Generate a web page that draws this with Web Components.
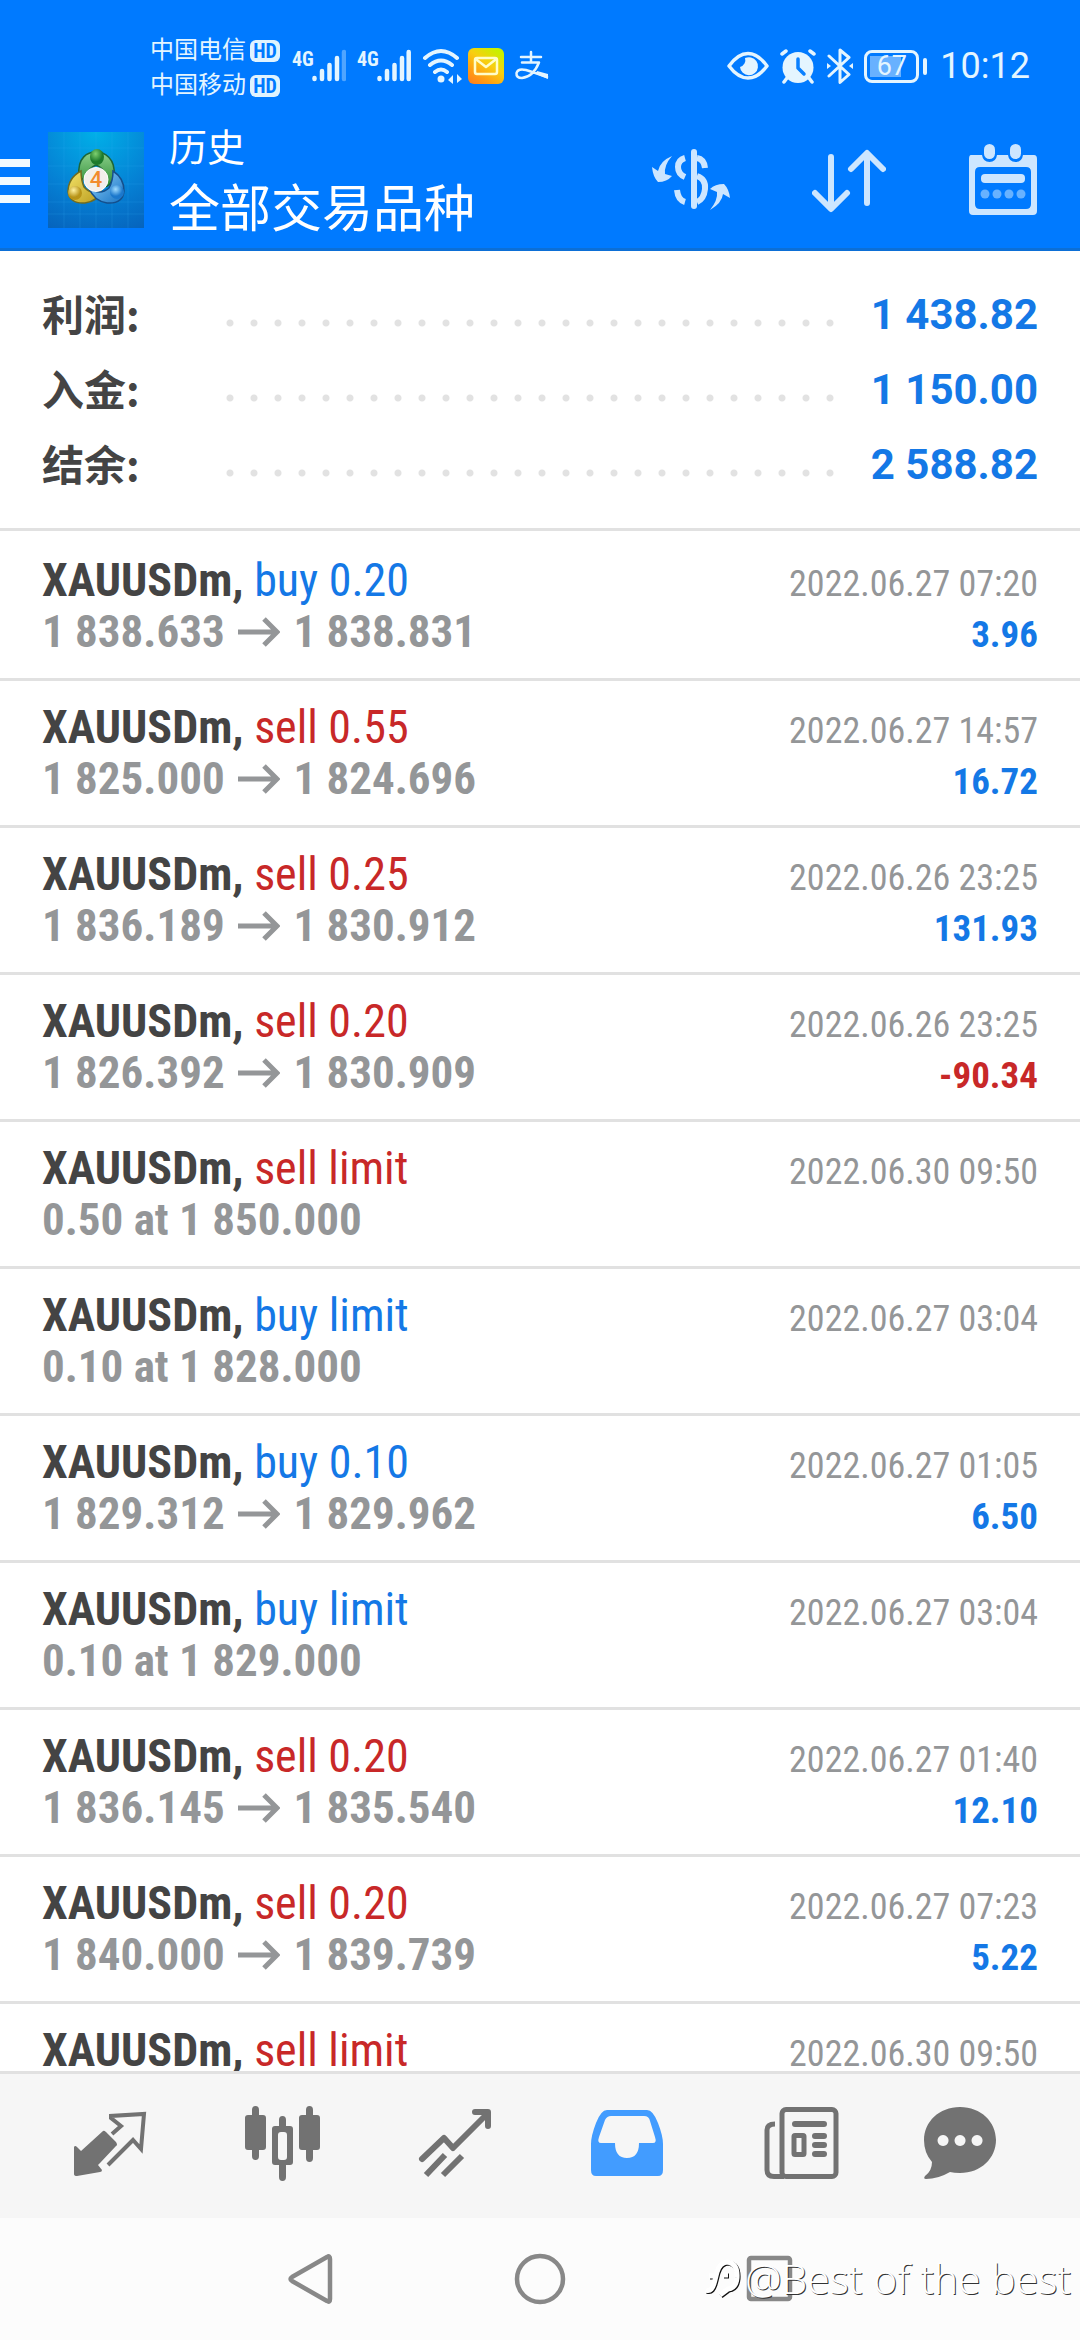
<!DOCTYPE html>
<html lang="zh-CN">
<head>
<meta charset="utf-8">
<meta name="viewport" content="width=device-width">
<title>历史</title>
<style>
  html, body { margin: 0; height: 100%; }
  body { background: #fff; font-family: Roboto, "Noto Sans CJK SC", sans-serif; }
</style>
</head>
<body>
<history-app></history-app>

<template id="t-status">
  <style>
    :host { display: flex; align-items: center; height: 64px; padding: 36px 50px 0 150px; color: #e4f5ff; }
    .carriers { display: grid; gap: 0; }
    .carrier { display: flex; align-items: center; gap: 4px; font-size: 24px; line-height: 35px; }
    .hd { box-sizing: border-box; width: 30px; height: 22px; border-radius: 6px; background: #dff3ff; color: #007aff; font: bold 20px/22px "Roboto Condensed", "Liberation Sans Narrow", sans-serif; text-align: center; }
    .cell { display: flex; align-items: flex-start; height: 34px; }
    .cell span { font: bold 20px/20px "Roboto Condensed", "Liberation Sans Narrow", sans-serif; width: 18px; }
    .left, .right { display: flex; align-items: center; margin-top: -4px; }
    .left { margin-left: 12px; gap: 11px; }
    .right { margin-left: auto; gap: 11px; }
    .grp { display: flex; align-items: center; gap: 6px; }
    svg { display: block; fill: none; stroke: currentColor; stroke-linecap: round; stroke-linejoin: round; }
    .bat { display: flex; align-items: center; gap: 4px; margin-right: 2px; }
    .bat b { box-sizing: border-box; width: 55px; height: 33px; border: 3px solid; border-radius: 8px; padding: 3px; font: 400 27px/21px Roboto, sans-serif; background: linear-gradient(#68b1ff, #68b1ff) 3px 3px / 31px 21px no-repeat; text-align: center; }
    .bat i { width: 4px; height: 17px; border-radius: 2px; background: currentColor; }
    time { font-size: 36px; line-height: 40px; font-weight: 400; }
  </style>
  <div class="carriers">
    <div class="carrier">中国电信<span class="hd">HD</span></div>
    <div class="carrier">中国移动<span class="hd">HD</span></div>
  </div>
  <div class="left">
    <div class="cell"><span>4G</span><svg width="36" height="34" viewBox="0 0 36 34" stroke-width="4.500"><path d="M4.500 29v1M12 22v8M19.500 16v14M27 9v21"/><path d="M34 3v27" opacity=".35"/></svg></div>
    <div class="cell"><span>4G</span><svg width="36" height="34" viewBox="0 0 36 34" stroke-width="4.500"><path d="M4.500 29v1M12 22v8M19.500 16v14M27 9v21M33.700 3v27"/></svg></div>
    <div class="grp">
      <svg width="40" height="36" viewBox="0 0 40 36" stroke-width="4"><path d="M3 10Q19 -4 35 10M8 17Q19 8 30 17M13 24Q19 19 25 24"/><circle cx="19" cy="31" r="3.500" fill="currentColor" stroke="none"/><path d="M26 32l5-5v9zM35 26v9l5-4z" fill="currentColor" stroke="none"/></svg>
      <svg width="36" height="36" viewBox="0 0 36 36"><defs><linearGradient id="m" x1="0" y1="1" x2=".7" y2="0"><stop stop-color="#ff7a1c"/><stop offset=".3" stop-color="#ff9d14"/><stop offset=".65" stop-color="#f8cf10"/><stop offset="1" stop-color="#c8f000"/></linearGradient></defs><rect width="36" height="36" rx="6" fill="url(#m)" stroke="none"/><rect x="7" y="10" width="22" height="16" rx="2" stroke="#fffdc8" stroke-width="2.500"/><path d="M9 12l9 7 9-7" stroke="#fffdc8" stroke-width="2.500"/></svg>
      <svg width="40" height="34" viewBox="0 0 40 34" stroke-width="2.500" stroke-linecap="butt"><path d="M11 8H31M21 3v10M12 13.500H29Q23 28 12 29Q6 29 6.500 24Q8 19 16 21Q26 24 37 28" /><path d="M27 22l11 3v5l-12-5z" fill="currentColor" stroke="none"/></svg>
    </div>
  </div>
  <div class="right">
    <svg width="42" height="36" viewBox="0 0 42 36" stroke-width="3.500"><path d="M2 18Q11 5.500 21 5.500Q31 5.500 40 18Q31 30 21 30Q11 30 2 18Z"/><path d="M18 10A7 7 0 0 1 13 19A9 9 0 1 0 24 9.500Q21 9 18 10Z" fill="currentColor" stroke="none"/></svg>
    <svg width="36" height="36" viewBox="0 0 36 36" stroke-width="3.500"><circle cx="18" cy="19.500" r="15.500" fill="currentColor" stroke="none"/><path d="M2 6l4-3M34 6l-4-3M7 30l-3 4M29 30l3 4"/><path d="M18 11v9l6 6" stroke="#0a80ff"/></svg>
    <svg width="26" height="38" viewBox="0 0 26 38" stroke-width="3"><path d="M2 9L22 27.500L13 35.500V3L22 10.500L2 29"/><path d="M0 16l4 3-4 3zM26 16l-4 3 4 3z" fill="currentColor" stroke="none"/></svg>
    <div class="bat"><b>67</b><i></i></div>
    <time>10:12</time>
  </div>
</template>

<template id="t-toolbar">
  <style>
    :host { display: flex; align-items: center; box-sizing: border-box; height: 151px; padding: 11px 42px 0 0; border-bottom: 3px solid #0c6fd6; color: #cde6ff; }
    button { appearance: none; border: 0; padding: 0; background: none; color: inherit; display: block; }
    svg { display: block; }
    .menu { width: 30px; display: grid; gap: 10px; margin: 3px 18px 0 0; }
    .menu i { height: 8px; background: #f2faff; }
    .titles { margin: 8px 0 0 25px; color: #fff; flex: 1; }
    h1, p { margin: 0; font-weight: 400; }
    p { font-size: 38px; line-height: 52px; }
    h1 { font-size: 51px; line-height: 72px; }
    .actions { display: flex; gap: 82px; }
  </style>
  <button class="menu" aria-label="菜单"><i></i><i></i><i></i></button>
  <svg width="96" height="96" viewBox="0 0 96 96">
    <defs>
      <radialGradient id="bg" cx=".5" cy="0" r="1.100"><stop stop-color="#00b0e8"/><stop offset=".6" stop-color="#0580d4"/><stop offset="1" stop-color="#0664bd"/></radialGradient>
      <linearGradient id="g" x2="0" y2="1"><stop stop-color="#8cd08c"/><stop offset="1" stop-color="#2d8c35"/></linearGradient>
      <linearGradient id="y" x2="1" y2="1"><stop stop-color="#f4e46a"/><stop offset="1" stop-color="#b99a1c"/></linearGradient>
      <linearGradient id="b" x2="1" y2="1"><stop stop-color="#8fd0fa"/><stop offset="1" stop-color="#1673c4"/></linearGradient>
      <radialGradient id="gd" cx=".4" cy=".3"><stop stop-color="#7ed070"/><stop offset="1" stop-color="#1d7a2c"/></radialGradient>
      <radialGradient id="yd" cx=".4" cy=".3"><stop stop-color="#fff2a0"/><stop offset="1" stop-color="#b89418"/></radialGradient>
      <radialGradient id="bd" cx=".4" cy=".3"><stop stop-color="#a0dcff"/><stop offset="1" stop-color="#1b78cc"/></radialGradient>
    </defs>
    <rect width="96" height="96" fill="url(#bg)"/>
    <path d="M0 16H96M0 34H96M0 52H96M0 70H96M0 82H96M16 0V96M32 0V96M48 0V96M64 0V96M80 0V96" stroke="#39b0ee" stroke-opacity=".2"/>
    <path d="M31 44C29 25 40 20 48 20S68 26 66 44Q63 55 55 55Q61 38 48 33Q36 38 41 52Z" fill="url(#g)" stroke="#1d6637" stroke-width="1.500"/>
    <path d="M33 39Q20 46 20 60Q22 72 37 71Q50 69 53 59Q43 63 36 55Q33 48 33 39Z" fill="url(#y)" stroke="#6f6c22" stroke-width="1.500"/>
    <path d="M65 39Q76 46 76 59Q75 72 59 71Q46 69 41 56Q52 64 61 56Q65 49 65 39Z" fill="url(#b)" stroke="#154f8c" stroke-width="1.500"/>
    <ellipse cx="49" cy="25" rx="7" ry="8" fill="url(#gd)"/><ellipse cx="27" cy="61" rx="7" ry="7" fill="url(#yd)"/><ellipse cx="69" cy="60" rx="7" ry="7" fill="url(#bd)"/>
    <circle cx="48" cy="47.500" r="12" fill="#f3efec" stroke="#fff"/>
    <text x="48" y="55" text-anchor="middle" font-family="Roboto, sans-serif" font-size="22" font-weight="500" fill="#f28b2e">4</text>
  </svg>
  <div class="titles"><p>历史</p><h1>全部交易品种</h1></div>
  <div class="actions">
    <button aria-label="货币"><svg width="78" height="78" viewBox="0 1 78 78" fill="none" stroke="currentColor" stroke-width="6"><path d="M42 12V66" stroke-linecap="round"/><path d="M33 18Q26 20 26 27Q26 34 33 37M25 50Q26 60 33 62M45 18Q52 19 53 28" /><path d="M45 36Q54 39 53 49Q52 59 45 62"/><path d="M20 16Q8 21 6 31L0 27Q1 37 6 42Q15 42 20 36L13 34Q12 25 20 16ZM58 70Q70 63 71 54L78 58Q77 49 72 44Q63 44 58 49L65 52Q66 60 58 70Z" fill="currentColor" stroke="none"/></svg></button>
    <button aria-label="排序"><svg width="74" height="78" viewBox="0 1 74 78" fill="none" stroke="currentColor" stroke-width="6" stroke-linecap="round" stroke-linejoin="round"><path d="M19 17V68M3 53L19 69L35 53M55 63V14M39 29L55 13L71 29"/></svg></button>
    <button aria-label="日期"><svg width="70" height="78" viewBox="0 2 70 78"><path fill="currentColor" fill-rule="evenodd" d="M3 16H14Q15 23 21.500 23Q28 23 29 16H40Q41 23 47.500 23Q54 23 55 16H66Q69 16 69 20V72Q69 76 65 76H5Q1 76 1 72V20Q1 16 3 16ZM12 28Q7 28 7 33V65Q7 70 12 70H58Q63 70 63 65V33Q63 28 58 28Z"/><rect x="16" y="5" width="11" height="15" rx="5.500" fill="currentColor"/><rect x="42" y="5" width="11" height="15" rx="5.500" fill="currentColor"/><rect x="13" y="35" width="44" height="9" rx="4" fill="currentColor"/><g fill="#68b2ff"><circle cx="17" cy="55" r="4.500"/><circle cx="29" cy="55" r="4.500"/><circle cx="41" cy="55" r="4.500"/><circle cx="53" cy="55" r="4.500"/></g></svg></button>
  </div>
</template>

<template id="t-sum">
  <style>
    :host { display: flex; align-items: center; height: 75px; }
    .label { width: 176px; padding-bottom: 3px; font: 700 42px/60px "Noto Sans CJK SC", sans-serif; color: #444; }
    .dots { flex: 1; height: 24px; margin-top: 16px; background: radial-gradient(circle, #e2e2e2 3px, transparent 4px) 0 0 / 24px 24px; }
    .value { width: 196px; text-align: right; font-size: 42px; line-height: 60px; font-weight: 700; color: #1478e6; }
  </style>
  <span class="label"><slot></slot></span><span class="dots"></span><span class="value"><slot name="value"></slot></span>
</template>

<template id="t-deal">
  <style>
    :host { display: block; padding: 21px 42px; border-bottom: 3px solid #e1e1e1; font-family: "Roboto Condensed", "Liberation Sans Narrow", Roboto, sans-serif; --side: #1478e6; --result: #1478e6; }
    :host([side="sell"]) { --side: #c82828; }
    :host([loss]) { --result: #c82828; }
    div { display: flex; align-items: baseline; justify-content: space-between; height: 51px; line-height: 51px; font-size: 46px; white-space: pre; }
    b { color: #444; }
    .type { color: var(--side); }
    .detail { font-size: 45px; font-weight: 700; color: #949698; }
    time { font-size: 36px; color: #949698; }
    .result { font-size: 37px; font-weight: 700; color: var(--result); }
    svg { width: 42px; height: 30px; margin: 0 3px; fill: none; stroke: currentColor; stroke-width: 5; }
  </style>
  <div><span><b class="symbol"></b><span class="type"></span></span><time></time></div>
  <div><span class="detail"></span><span class="result"></span></div>
</template>

<template id="t-tabs">
  <style>
    :host { display: grid; grid-template-columns: repeat(5, 43fr) 37fr; padding: 0 46px 0 24px; height: 144px; background: #f6f6f6; border-top: 3px solid #e1e1e1; color: #727272; }
    a { display: grid; place-items: center; color: inherit; padding-bottom: 4px; }
    a[aria-current] { color: #429cff; }
    svg { width: 80px; height: 80px; fill: none; stroke: currentColor; stroke-linejoin: round; }
    .f { fill: currentColor; stroke: none; }
  </style>
  <a href="#quotes" aria-label="行情"><svg viewBox="0 0 80 80"><path class="f" d="M33 27Q34 26 36 28L46 38Q48 41 46 42L30 59L28 61L32 66Q32 68 30 68L7 72Q4 72 4 70V43Q5 41 7 43L11 47Z"/><path stroke-width="4" stroke-linejoin="miter" d="M42 30L51 22L41 14V12L74 10L71 45L63 36L38 61"/></svg></a>
  <a href="#chart" aria-label="图表"><svg viewBox="1 1 80 80"><path class="f" d="M10 7q0-4 3.500-4t3.500 4v5h4q3 0 3 3v29q0 3-3 3h-4v6q0 4-3.500 4t-3.500-4v-6h-4q-3 0-3-3V15q0-3 3-3h4zM64 7q0-4 3.500-4t3.500 4v5h4q3 0 3 3v29q0 3-3 3h-4v8q0 4-3.500 4t-3.500-4v-8h-4q-3 0-3-3V15q0-3 3-3h4z"/><path class="f" fill-rule="evenodd" d="M37 17q0-4 3.500-4t3.500 4v6h4q3 0 3 3v33q0 3-3 3h-4v12q0 4-3.500 4t-3.500-4v-12h-4q-3 0-3-3V26q0-3 3-3h4zM39 29q-3 0-3 3v22q0 3 3 3h3q3 0 3-3V32q0-3-3-3z"/></svg></a>
  <a href="#trade" aria-label="交易"><svg viewBox="0 0 80 80" stroke-width="6"><path d="M7 55L29 34L38 44L72 10M60 8H73V22" stroke-linecap="round"/><path d="M11 71L30 51M28 71L47 52"/></svg></a>
  <a href="#history" aria-label="历史" aria-current="page"><svg viewBox="0 0 80 80"><path class="f" fill-rule="evenodd" d="M20 6H60Q66 6 71 19T76 40V66Q76 72 71 72H9Q4 72 4 66V40Q4 32 9 19T20 6ZM24 12Q20 12 18 16L12 33Q10 39 14 39H28Q28 54 40 54T52 39H66Q70 39 68 33L63 17Q62 12 57 12Z"/></svg></a>
  <a href="#news" aria-label="新闻"><svg viewBox="-2 0 80 80" stroke-width="5"><rect x="20" y="5.500" width="54" height="67" rx="4"/><path d="M13 20Q5 20 5 26V66Q5 72.500 12 72.500H22"/><path d="M33 20H62M53 32H62M53 41H62M53 50H62" stroke-width="6" stroke-linecap="round"/><rect x="32" y="31.500" width="10" height="19" rx="1"/></svg></a>
  <a href="#mail" aria-label="消息"><svg viewBox="0 0 80 80"><path class="f" fill-rule="evenodd" d="M40 3C61 3 76 18 76 36S61 69 40 69Q34 69 30 68Q18 75 6 75Q3 75 5 72Q12 67 12 58Q4 49 4 36C4 18 19 3 40 3ZM23 31a5.500 5.500 0 1 0 .1 0zM40 31a5.500 5.500 0 1 0 .1 0zM57 31a5.500 5.500 0 1 0 .1 0z"/></svg></a>
</template>

<template id="t-nav">
  <style>
    :host { position: relative; display: grid; grid-template-columns: repeat(3, 230px); justify-content: center; height: 122px; background: #fcfcfc; color: #888; }
    button { appearance: none; border: 0; padding: 0; background: none; color: inherit; display: grid; place-items: center; }
    svg { display: block; fill: none; stroke: currentColor; stroke-width: 4.500; stroke-linejoin: round; }
    .mark { position: absolute; right: 9px; bottom: 34px; display: flex; align-items: center; gap: 4px; color: #fff; font: 300 41px/56px "Open Sans", "Noto Sans", sans-serif; text-shadow: 1px 1px 0 #333; }
    .mark svg { stroke-width: 5; stroke: #fff; filter: drop-shadow(1px 1px 0 #111); }
  </style>
  <button aria-label="返回"><svg width="54" height="54" viewBox="0 0 54 54"><path d="M44 5Q47 3 47 7V47Q47 51 44 49L9 29Q6 27 9 25Z"/></svg></button>
  <button aria-label="主页"><svg width="54" height="54" viewBox="0 0 54 54"><circle cx="27" cy="27" r="23"/></svg></button>
  <button aria-label="最近任务"><svg width="54" height="54" viewBox="0 0 54 54"><rect x="6" y="6" width="41" height="41" rx="2"/></svg></button>
  <div class="mark"><svg width="38" height="42" viewBox="0 0 38 42"><path d="M3 33Q9 36 12 23L14 15Q17 5 25 5Q35 7 34 21Q33 31 25 32L17 38M6 19H12M20 18H25"/></svg><span>@Best of the best</span></div>
</template>

<template id="t-app">
  <style>
    :host { display: flex; flex-direction: column; height: 100vh; background: #fff; }
    header { background: #007aff; }
    .summary { padding: 26px 42px; border-bottom: 3px solid #e1e1e1; }
    main { flex: 1; min-height: 0; overflow-y: auto; scrollbar-width: none; }
    .deals { padding-top: 3px; }
  </style>
  <header><status-bar></status-bar><tool-bar></tool-bar></header>
  <main>
    <section class="summary">
      <sum-line>利润:<span slot="value">1 438.82</span></sum-line>
      <sum-line>入金:<span slot="value">1 150.00</span></sum-line>
      <sum-line>结余:<span slot="value">2 588.82</span></sum-line>
    </section>
    <section class="deals">
      <deal-row side="buy" type="buy 0.20" from="1 838.633" to="1 838.831" time="2022.06.27 07:20" result="3.96"></deal-row>
      <deal-row side="sell" type="sell 0.55" from="1 825.000" to="1 824.696" time="2022.06.27 14:57" result="16.72"></deal-row>
      <deal-row side="sell" type="sell 0.25" from="1 836.189" to="1 830.912" time="2022.06.26 23:25" result="131.93"></deal-row>
      <deal-row side="sell" type="sell 0.20" from="1 826.392" to="1 830.909" time="2022.06.26 23:25" result="-90.34" loss></deal-row>
      <deal-row side="sell" type="sell limit" from="0.50 at 1 850.000" time="2022.06.30 09:50"></deal-row>
      <deal-row side="buy" type="buy limit" from="0.10 at 1 828.000" time="2022.06.27 03:04"></deal-row>
      <deal-row side="buy" type="buy 0.10" from="1 829.312" to="1 829.962" time="2022.06.27 01:05" result="6.50"></deal-row>
      <deal-row side="buy" type="buy limit" from="0.10 at 1 829.000" time="2022.06.27 03:04"></deal-row>
      <deal-row side="sell" type="sell 0.20" from="1 836.145" to="1 835.540" time="2022.06.27 01:40" result="12.10"></deal-row>
      <deal-row side="sell" type="sell 0.20" from="1 840.000" to="1 839.739" time="2022.06.27 07:23" result="5.22"></deal-row>
      <deal-row side="sell" type="sell limit" time="2022.06.30 09:50"></deal-row>
    </section>
  </main>
  <tab-bar></tab-bar>
  <system-nav></system-nav>
</template>

<script>
  class TemplateElement extends HTMLElement {
    constructor() {
      super();
      this.attachShadow({ mode: "open" }).append(
        document.getElementById(this.constructor.template).content.cloneNode(true));
    }
  }
  class StatusBar extends TemplateElement { static template = "t-status"; }
  class ToolBar extends TemplateElement { static template = "t-toolbar"; }
  class SumLine extends TemplateElement { static template = "t-sum"; }
  class TabBar extends TemplateElement { static template = "t-tabs"; }
  class SystemNav extends TemplateElement { static template = "t-nav"; }
  class HistoryApp extends TemplateElement { static template = "t-app"; }

  // One deal or pending order; "to" is present only for closed deals.
  class DealRow extends TemplateElement {
    static template = "t-deal";
    connectedCallback() {
      const get = (name) => this.getAttribute(name) || "";
      const part = (selector) => this.shadowRoot.querySelector(selector);
      part(".symbol").textContent = (get("symbol") || "XAUUSDm") + ", ";
      part(".type").textContent = get("type");
      part("time").textContent = get("time");
      part(".result").textContent = get("result");
      part(".detail").textContent = get("from");
      if (get("to")) {
        part(".detail").insertAdjacentHTML("beforeend",
          ' <svg viewBox="0 0 42 30" aria-hidden="true"><path d="M0 15H39M26 2L39 15L26 28"/></svg> ');
        part(".detail").append(get("to"));
      }
    }
  }

  customElements.define("status-bar", StatusBar);
  customElements.define("tool-bar", ToolBar);
  customElements.define("sum-line", SumLine);
  customElements.define("deal-row", DealRow);
  customElements.define("tab-bar", TabBar);
  customElements.define("system-nav", SystemNav);
  customElements.define("history-app", HistoryApp);
</script>
</body>
</html>
